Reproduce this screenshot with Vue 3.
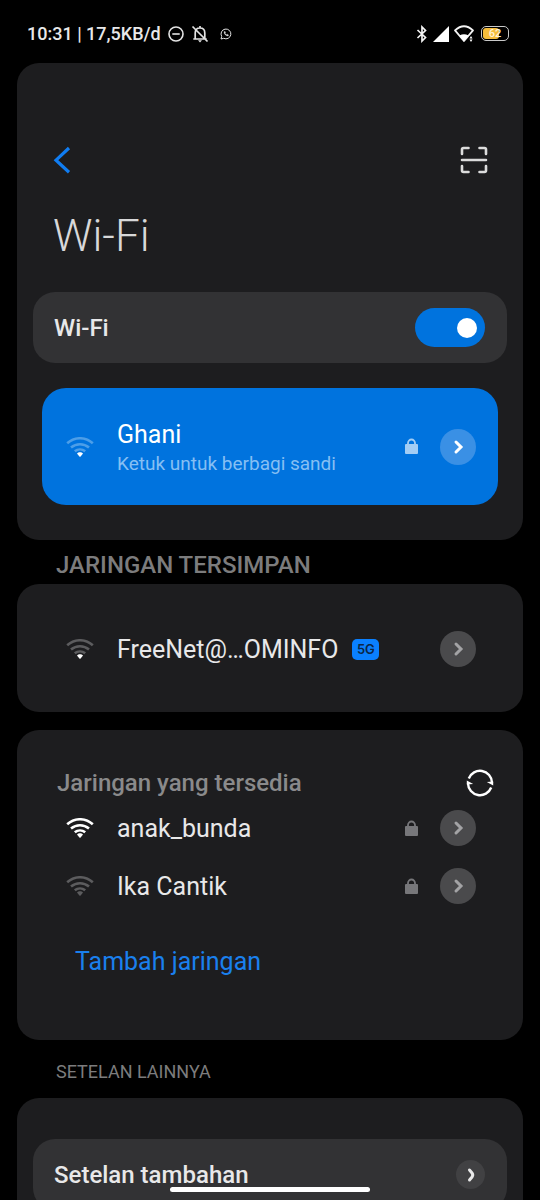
<script setup>
import { ref } from 'vue'

const wifiOn = ref(true)
const available = [
  { name: 'anak_bunda', level: 'full' },
  { name: 'Ika Cantik', level: 'none' },
]
const arcs = [
  'M1.2 6.3C8.5-.4 19.500-.4 26.800 6.300',
  'M5 10.500c5.300-4.400 12.700-4.400 18 0',
  'M8.800 14.300c3-2.500 7.400-2.500 10.400 0',
]
const wifiDot = 'M11 16.400c1.500-1.700 4.500-1.700 6 0L14.600 19.600q-.6.5-1.200 0z'
const chevron = 'M10 7l5 5-5 5'
const lockBody = 'M2 6h11a1 1 0 0 1 1 1v8a1 1 0 0 1-1 1H2a1 1 0 0 1-1-1V7a1 1 0 0 1 1-1z'
const lockRing = 'M4 6.5V5a3.500 3.500 0 0 1 7 0v1.500'
</script>

<template>
  <div class="screen">
    <header class="status">
      <span class="clock">10:31 | 17,5KB/d</span>
      <svg class="dnd" width="16" height="16" viewBox="0 0 16 16" fill="none" stroke="#e4e4e4" stroke-width="1.6">
        <circle cx="8" cy="8" r="7" /><path d="M4.3 8h7.4" />
      </svg>
      <svg class="bell" width="18" height="18" viewBox="0 0 18 18" fill="none" stroke="#e4e4e4" stroke-width="1.7">
        <path d="M4.2 14V8c0-3 1.8-5 4.800-5s4.800 2 4.800 5v6M2.300 14h13.400M1.500 1.500l15 15M9 1v2" />
        <path d="M7 15.300h4L9 17.500z" fill="#e4e4e4" stroke="none" />
      </svg>
      <svg class="chat" width="12" height="12" viewBox="0 0 12 12" fill="none" stroke="#e4e4e4">
        <path d="M1 11l.7-2.600A4.900 4.900 0 1 1 3.700 10.300z" />
        <path d="M4.200 3.500c-.8 2 2 5 4 4.400l.3-1-1.300-.7-.8.6-1.300-1.400.5-.7-.5-1.300z" fill="#e4e4e4" stroke-width=".3" />
      </svg>
      <span class="spacer"></span>
      <svg width="12" height="18" viewBox="0 0 12 18" fill="none" stroke="#f4f4f4" stroke-width="1.7">
        <path d="M1.500 5l8 7.500L6 16V2l3.500 3.500-8 7.500" />
      </svg>
      <svg class="signal" width="16" height="16" viewBox="0 0 16 16"><path d="M16 0v16H0z" fill="#fff" /></svg>
      <svg class="net" width="20" height="18" viewBox="0 0 20 18">
        <path d="M1 5.300Q10-2.800 19 5.300L10 16z" fill="none" stroke="#f4f4f4" stroke-width="1.8" stroke-linejoin="round" />
        <path d="M5.500 10.500q4.500-2.600 9 0L10 16z" fill="#fff" />
        <path d="M17 11v6.500" stroke="#000" stroke-width="4" />
        <path d="M17 11l1.500 2.500h-3zM17 17l1.500-2.500h-3z" fill="#fff" />
      </svg>
      <span class="battery"><span class="charge"></span><span class="percent">62</span></span>
    </header>

    <main>
      <section class="card top">
        <div class="toolbar">
          <button type="button" aria-label="Kembali">
            <svg width="18" height="28" viewBox="0 0 18 28" fill="none" stroke="#107df2" stroke-width="3.2"><path d="M16 2L3 14.200l13 12" /></svg>
          </button>
          <button type="button" aria-label="Pindai">
            <svg width="28" height="28" viewBox="0 0 28 28" fill="none" stroke="#dcdcdc" stroke-width="2.6" stroke-linecap="round">
              <path d="M2 8V3.500Q2 2 3.500 2H8.500M19.500 2h5Q26 2 26 3.500V8M26 20v4.500q0 1.500-1.500 1.500h-5M8.500 26h-5Q2 26 2 24.500V20M2 14h24" />
            </svg>
          </button>
        </div>
        <h1>Wi-Fi</h1>
        <label class="tile">
          <span>Wi-Fi</span>
          <input v-model="wifiOn" type="checkbox" role="switch" />
        </label>
        <div class="row connected">
          <svg class="wifi" width="28" height="20" viewBox="0 0 28 20" fill="none">
            <path v-for="d in arcs" :key="d" :d="d" class="arc" /><path :d="wifiDot" class="dot" />
          </svg>
          <div class="name">
            <div>Ghani</div>
            <div class="hint">Ketuk untuk berbagi sandi</div>
          </div>
          <svg class="lock" width="15" height="17" viewBox="0 0 15 17"><path :d="lockBody" class="body" /><path :d="lockRing" class="ring" /></svg>
          <button type="button" class="more" aria-label="Detail Ghani">
            <svg width="24" height="24" viewBox="0 0 24 24"><path :d="chevron" /></svg>
          </button>
        </div>
      </section>

      <h2 class="saved-label">JARINGAN TERSIMPAN</h2>
      <section class="card saved">
        <div class="row">
          <svg class="wifi" width="28" height="20" viewBox="0 0 28 20" fill="none">
            <path v-for="d in arcs" :key="d" :d="d" class="arc" /><path :d="wifiDot" class="dot" />
          </svg>
          <div class="name">FreeNet@…OMINFO<span class="badge">5G</span></div>
          <button type="button" class="more" aria-label="Detail FreeNet">
            <svg width="24" height="24" viewBox="0 0 24 24"><path :d="chevron" /></svg>
          </button>
        </div>
      </section>

      <section class="card available">
        <div class="heading">
          <h2>Jaringan yang tersedia</h2>
          <button type="button" aria-label="Segarkan">
            <svg width="28" height="28" viewBox="0 0 28 28" fill="none" stroke="#fff" stroke-width="2.4">
              <path d="M2.800 9.500A12 12 0 0 1 26 13.500M25.200 18.500A12 12 0 0 1 2 14.500" />
              <path d="M20.800 12.900l6.400-.4v4zM7.200 15.100l-6.400.4v-4z" fill="#fff" stroke="none" />
            </svg>
          </button>
        </div>
        <div v-for="n in available" :key="n.name" class="row" :class="n.level">
          <svg class="wifi" width="28" height="20" viewBox="0 0 28 20" fill="none">
            <path v-for="d in arcs" :key="d" :d="d" class="arc" /><path :d="wifiDot" class="dot" />
          </svg>
          <div class="name">{{ n.name }}</div>
          <svg class="lock" width="15" height="17" viewBox="0 0 15 17"><path :d="lockBody" class="body" /><path :d="lockRing" class="ring" /></svg>
          <button type="button" class="more" :aria-label="'Detail ' + n.name">
            <svg width="24" height="24" viewBox="0 0 24 24"><path :d="chevron" /></svg>
          </button>
        </div>
        <button type="button" class="add">Tambah jaringan</button>
      </section>

      <h2 class="other-label">SETELAN LAINNYA</h2>
      <section class="card other">
        <button type="button" class="tile">
          <span>Setelan tambahan</span>
          <span class="go"><svg width="24" height="24" viewBox="0 0 24 24"><path d="M10.500 7l2.500 3q1.500 2 0 4l-2.500 3" /></svg></span>
        </button>
      </section>
    </main>
    <div class="home-bar"></div>
  </div>
</template>

<style>
body { background: #000; }
</style>

<style scoped>
* { box-sizing: border-box; }
.screen {
  position: relative;
  display: flex;
  flex-direction: column;
  height: 100vh;
  overflow: hidden;
  background: #000;
  color: #e8e8e9;
  font-family: Roboto, "Liberation Sans", sans-serif;
  font-size: 25px;
  line-height: 32px;
}
button {
  display: block;
  padding: 0;
  border: 0;
  background: none;
  color: inherit;
  font: inherit;
  text-align: left;
  cursor: pointer;
}
svg { display: block; flex: none; }
h1, h2 { margin: 0; }

.status {
  display: flex;
  flex: none;
  align-items: center;
  height: 63px;
  padding: 4px 31px 0 27px;
}
.clock { font-size: 18px; font-weight: 500; line-height: 24px; }
.dnd { margin-left: 7px; }
.bell { margin-left: 7px; }
.chat { margin-left: 11px; }
.spacer { flex: 1; }
.signal { margin-left: 5px; }
.net { margin-left: 5px; }
.battery {
  position: relative;
  width: 28px;
  height: 15px;
  margin-left: 7px;
  padding: 1px;
  border: 1px solid #c9c9c9;
  border-radius: 5px;
}
.charge { display: block; width: 16px; height: 11px; border-radius: 3px; background: #f5bd3c; }
.percent {
  position: absolute;
  inset: 0;
  color: #fff3d6;
  font-size: 11px;
  font-weight: 500;
  line-height: 13px;
  text-align: center;
}

main { flex: 1; min-height: 0; padding: 0 17px; overflow: hidden; }
.card { border-radius: 22px; background: #1d1d1f; }
.top { padding: 83px 16px 35px; }
.toolbar { display: flex; justify-content: space-between; padding: 0 19px 0 20px; }
h1 {
  margin: 36px 0 30px;
  padding-left: 20px;
  color: #d8d8d9;
  font-size: 44px;
  font-weight: 300;
  line-height: 52px;
}
.tile {
  display: flex;
  align-items: center;
  justify-content: space-between;
  width: 100%;
  height: 71px;
  padding: 0 22px 0 21px;
  border-radius: 22px;
  background: #323234;
  font-size: 24px;
  font-weight: 500;
}
input {
  display: flex;
  align-items: center;
  width: 70px;
  height: 39px;
  margin: 0;
  padding: 0 8px;
  border-radius: 20px;
  background: #555;
  appearance: none;
}
input::before { width: 20px; height: 20px; border-radius: 50%; background: #fff; content: ""; }
input:checked { justify-content: flex-end; background: #0073de; }

.row { display: flex; align-items: center; height: 58px; padding: 0 47px 0 49px; }
.wifi { margin-right: 23px; }
.arc { stroke: #5c5c5e; stroke-width: 2.6; }
.dot { fill: #fff; }
.full .arc { stroke: #fff; }
.none .dot { fill: #5c5c5e; }
.name { flex: 1; padding-top: 2px; }
.lock { margin-right: 21px; }
.body { fill: #77777a; }
.ring { fill: none; stroke: #77777a; stroke-width: 1.8; }
.more {
  display: flex;
  align-items: center;
  justify-content: center;
  width: 36px;
  height: 36px;
  border-radius: 50%;
  background: #4a4a4c;
}
.more path, .go path { fill: none; stroke: #a3a3a5; stroke-width: 3; stroke-linecap: round; }
.connected {
  height: 117px;
  margin: 25px 9px 0;
  padding: 0 22px 0 24px;
  border-radius: 24px;
  background: #0073de;
  color: #fff;
}
.connected .arc { stroke: #4c9ee8; }
.connected .body { fill: #a3cdf4; }
.connected .ring { stroke: #a3cdf4; }
.connected .more { background: #3a90e5; }
.connected .more path { stroke: #fff; }
.hint { color: #86bff3; font-size: 19px; line-height: 26px; }

h2 { color: #8a8a8b; font-size: 24px; font-weight: 500; }
.saved-label { padding: 9px 39px 3px; color: #7c7c7d; }
.saved { padding: 36px 0 34px; }
.badge {
  display: inline-block;
  width: 27px;
  height: 21px;
  margin-left: 14px;
  border-radius: 5px;
  background: #0a80ff;
  color: #0b2748;
  font-family: Inter, sans-serif;
  font-size: 13px;
  font-weight: 600;
  line-height: 21px;
  text-align: center;
  vertical-align: 4px;
}
.available { margin-top: 18px; padding: 36px 0 62px; }
.heading { display: flex; align-items: center; justify-content: space-between; padding: 0 29px 0 40px; }
.heading h2 { padding-top: 1px; }
.add { margin: 31px 0 0 58px; color: #1a80ee; }
.other-label { padding: 19px 39px 13px; color: #7c7c7d; font-size: 18px; font-weight: 400; line-height: 26px; }
.other { padding: 41px 16px; }
.go {
  display: flex;
  align-items: center;
  justify-content: center;
  width: 29px;
  height: 29px;
  border-radius: 50%;
  background: #414143;
}
.go path { stroke: #e8e8e8; }
.home-bar {
  position: absolute;
  bottom: 8px;
  left: 50%;
  width: 200px;
  height: 5px;
  margin-left: -100px;
  border-radius: 3px;
  background: #fff;
}
</style>
